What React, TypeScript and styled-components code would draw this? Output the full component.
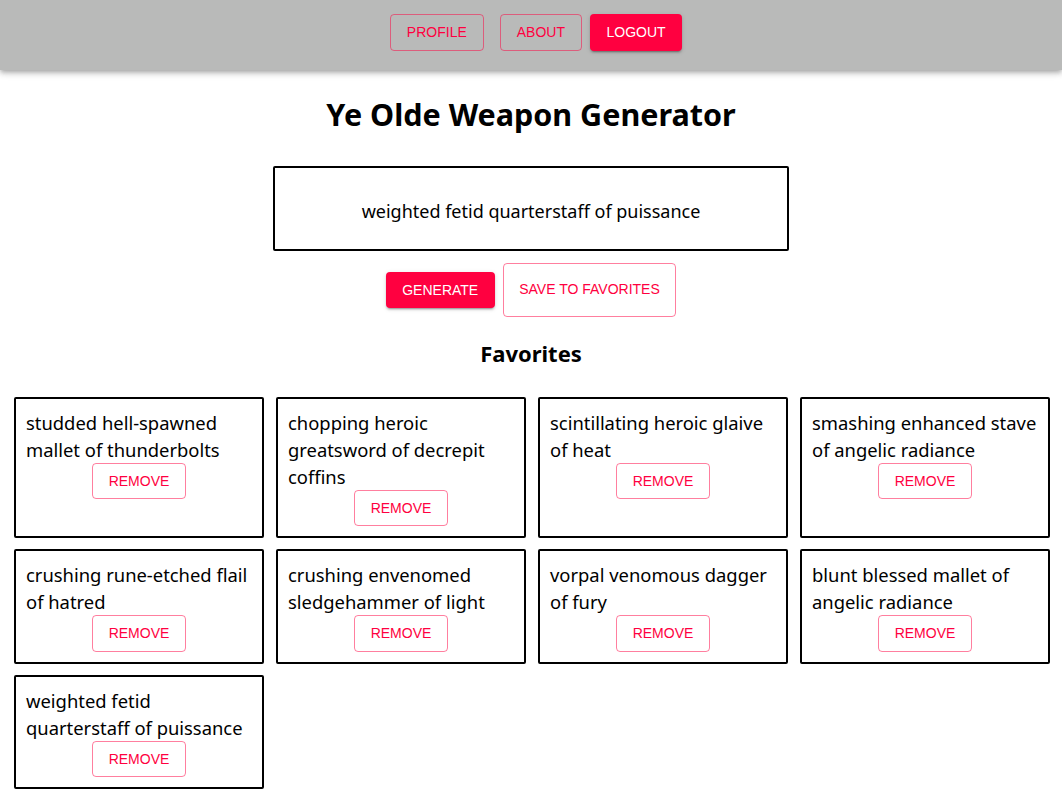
import React from "react";
import styled, { createGlobalStyle } from "styled-components";

const primary = "#ff0040";

const Global = createGlobalStyle`
  html, body { margin: 0; padding: 0; background: #fff; }
  body { font-family: "Noto Sans", "Open Sans", sans-serif; color: #000; }
`;

const NavBar = styled.nav`
  height: 70px;
  box-sizing: border-box;
  padding-top: 14px;
  background: #b9bab9;
  box-shadow: 0 2px 4px -1px rgba(0,0,0,0.2), 0 4px 5px 0 rgba(0,0,0,0.14), 0 1px 10px 0 rgba(0,0,0,0.12);
  display: flex;
  justify-content: center;
  align-items: flex-start;
  gap: 8px;
`;

const BaseButton = styled.button`
  font-family: "Liberation Sans", Arial, sans-serif;
  font-weight: 400;
  font-size: 14px;
  letter-spacing: 0;
  text-transform: uppercase;
  line-height: 24.5px;
  border-radius: 4px;
  cursor: pointer;
  box-sizing: border-box;
`;

const OutlinedButton = styled(BaseButton)<{ $big?: boolean }>`
  background: transparent;
  color: ${primary};
  border: 1px solid rgba(255, 0, 64, 0.5);
  padding: ${(p) => (p.$big ? "13px 15.5px 14px" : "5px 15.5px")};
`;

const NavOutlined = styled(OutlinedButton)<{ $ml?: number; $mr?: number }>`
  padding: 5px 16px;
  margin: 0 ${(p) => p.$mr ?? 0}px 0 ${(p) => p.$ml ?? 0}px;
`;

const ContainedButton = styled(BaseButton)`
  background: ${primary};
  color: #fff;
  border: none;
  padding: 6px 16.5px;
  box-shadow: 0 3px 1px -2px rgba(0,0,0,0.2), 0 2px 2px 0 rgba(0,0,0,0.14), 0 1px 5px 0 rgba(0,0,0,0.12);
`;

const Main = styled.main`
  display: flex;
  flex-direction: column;
  align-items: center;
`;

const Title = styled.h1`
  font-size: 30.5px;
  font-weight: 700;
  margin: 22px 0 0;
  line-height: 44px;
`;

const OutputBox = styled.div`
  margin-top: 30px;
  width: 516px;
  height: 85px;
  box-sizing: border-box;
  border: 2px solid #000;
  border-radius: 2px;
  display: flex;
  align-items: center;
  justify-content: center;
  padding-top: 4px;
  font-size: 18px;
`;

const ActionRow = styled.div`
  margin-top: 12px;
  display: flex;
  align-items: center;
  gap: 8px;
`;

const SubTitle = styled.h2`
  font-size: 22px;
  font-weight: 700;
  margin: 20px 0 0;
  line-height: 32px;
`;

const Grid = styled.div`
  align-self: stretch;
  margin-top: 28px;
  padding: 0 12px 16px 14px;
  display: grid;
  grid-template-columns: repeat(4, 1fr);
  gap: 11px 12px;
`;

const Card = styled.div`
  border: 2px solid #000;
  border-radius: 2px;
  padding: 10px 6px 10px 10px;
  display: flex;
  flex-direction: column;
  align-items: center;
`;

const CardText = styled.div`
  align-self: stretch;
  font-size: 18.4px;
  line-height: 27px;
`;

const RemoveButton = styled(OutlinedButton)`
  margin-right: 4px;
`;

const favorites = [
  "studded hell-spawned mallet of thunderbolts",
  "chopping heroic greatsword of decrepit coffins",
  "scintillating heroic glaive of heat",
  "smashing enhanced stave of angelic radiance",
  "crushing rune-etched flail of hatred",
  "crushing envenomed sledgehammer of light",
  "vorpal venomous dagger of fury",
  "blunt blessed mallet of angelic radiance",
  "weighted fetid quarterstaff of puissance",
];

export default function App() {
  return (
    <>
      <Global />
      <NavBar>
        <NavOutlined $ml={10} $mr={8}>Profile</NavOutlined>
        <NavOutlined>About</NavOutlined>
        <ContainedButton>Logout</ContainedButton>
      </NavBar>
      <Main>
        <Title>Ye Olde Weapon Generator</Title>
        <OutputBox>weighted fetid quarterstaff of puissance</OutputBox>
        <ActionRow>
          <ContainedButton>Generate</ContainedButton>
          <OutlinedButton $big>Save to Favorites</OutlinedButton>
        </ActionRow>
        <SubTitle>Favorites</SubTitle>
        <Grid>
          {favorites.map((f, i) => (
            <Card key={i}>
              <CardText>{f}</CardText>
              <RemoveButton>Remove</RemoveButton>
            </Card>
          ))}
        </Grid>
      </Main>
    </>
  );
}
